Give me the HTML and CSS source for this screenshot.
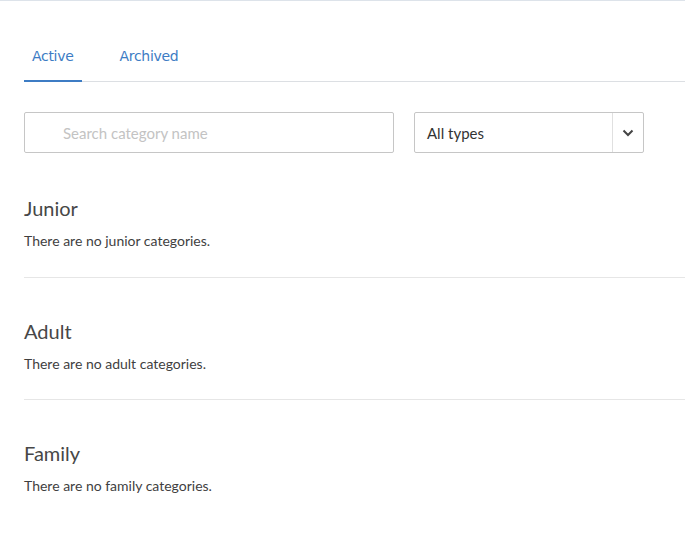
FILE: index.html
```html
<!DOCTYPE html>
<html lang="en">
<head>
  <meta charset="UTF-8">
  <meta name="viewport" content="width=device-width, initial-scale=1.0">
  <title>Categories</title>
  <link rel="stylesheet" href="styles.css">
</head>
<body>
<div class="page">
  <div class="tabs">
    <a class="tab active" href="#">Active</a>
    <a class="tab" href="#">Archived</a>
  </div>

  <div class="filters">
    <input type="text" class="search" placeholder="Search category name">
    <div class="select">
      <span class="select-value">All types</span>
      <span class="select-arrow">
        <svg width="12" height="8" viewBox="0 0 12 8"><path d="M1.5 1.5 L6 6 L10.5 1.5" fill="none" stroke="#444" stroke-width="2"/></svg>
      </span>
    </div>
  </div>

  <div class="section">
    <h3>Junior</h3>
    <p>There are no junior categories.</p>
  </div>
  <div class="section">
    <h3>Adult</h3>
    <p>There are no adult categories.</p>
  </div>
  <div class="section">
    <h3>Family</h3>
    <p>There are no family categories.</p>
  </div>
</div>
</body>
</html>
```

FILE: styles.css
```css
body {
  margin: 0;
  font-family: Lato, "Open Sans", sans-serif;
  color: #444;
  background: #fff;
  border-top: 1px solid #dde3ea;
}
.page {
  padding-left: 24px;
}
.tabs {
  display: flex;
  margin-top: 32px;
  border-bottom: 1px solid #dcdfe3;
}
.tab {
  font-family: "DejaVu Sans", sans-serif;
  font-size: 14px;
  letter-spacing: -0.3px;
  line-height: 20px;
  padding: 13px 8px 14px;
  margin-right: 30px;
  margin-bottom: -1px;
  color: #3d7cc4;
  text-decoration: none;
  border-bottom: 2px solid transparent;
}
.tab.active {
  border-bottom-color: #3d7cc4;
}
.filters {
  display: flex;
  margin-top: 30px;
  margin-bottom: 2px;
}
.search {
  box-sizing: border-box;
  width: 370px;
  height: 41px;
  border: 1px solid #c6c6c6;
  border-radius: 2px;
  padding: 0 12px 0 38px;
  font-family: Lato, sans-serif;
  font-size: 15px;
  color: #333;
}
.search::placeholder {
  color: #c3c3c3;
}
.select {
  box-sizing: border-box;
  display: flex;
  width: 230px;
  height: 41px;
  margin-left: 20px;
  border: 1px solid #c6c6c6;
  border-radius: 2px;
}
.select-value {
  flex: 1;
  padding-left: 12px;
  line-height: 40px;
  font-size: 15px;
  color: #333;
}
.select-arrow {
  width: 30px;
  border-left: 1px solid #e0e0e0;
  display: flex;
  align-items: center;
  justify-content: center;
}
.section {
  padding: 41px 0 25.5px;
  border-bottom: 1px solid #e6e6e6;
}
.section:last-child {
  border-bottom: none;
}
.section h3 {
  margin: 0 0 11px;
  font-size: 20px;
  font-weight: normal;
  line-height: 24px;
  color: #474747;
}
.section p {
  margin: 0;
  font-size: 14px;
  line-height: 20px;
  color: #3f3f3f;
}
```
